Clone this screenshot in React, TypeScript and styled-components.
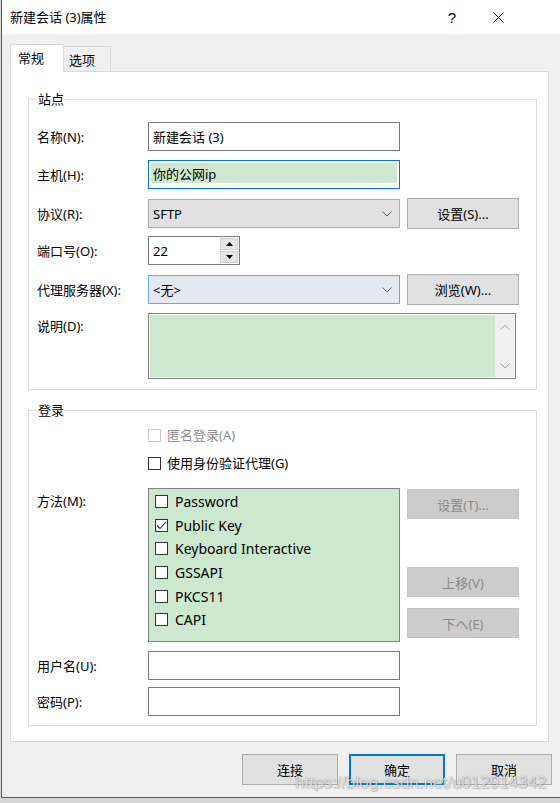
import React from 'react';
import styled, { createGlobalStyle, css } from 'styled-components';

const GlobalStyle = createGlobalStyle`
  html, body { margin: 0; padding: 0; background: #d6d6d6; }
  body {
    font-family: "Noto Sans", "Noto Sans CJK SC", sans-serif;
    font-size: 13px;
    color: #000;
  }
  * { box-sizing: border-box; }
`;

const Window = styled.div`
  position: relative;
  width: 559px;
  height: 798px;
  margin-left: 1px;
  background: #f0f0f0;
  border-left: 1px solid #5b5b5b;
  border-bottom: 1px solid #5b5b5b;
  display: flex;
  flex-direction: column;
`;

const TitleBar = styled.div`
  height: 34px;
  flex: none;
  background: #fff;
  display: flex;
  align-items: center;
  padding-left: 8px;
`;

const TitleText = styled.span`
  font-size: 13px;
  line-height: 18px;
`;

const TitleButtons = styled.div`
  margin-left: auto;
  display: flex;
  padding-right: 39px;
  height: 100%;
`;

const TitleButton = styled.div`
  width: 46px;
  height: 100%;
  display: flex;
  align-items: center;
  justify-content: center;
  font-family: "Liberation Sans", sans-serif;
  font-size: 15px;
`;

const Body = styled.div`
  flex: 1;
  display: flex;
  flex-direction: column;
  padding: 10px 0 0 8px;
`;

const TabStrip = styled.div`
  height: 27px;
  display: flex;
  align-items: flex-end;
`;

const Tab = styled.div<{ $active?: boolean }>`
  position: relative;
  display: flex;
  align-items: center;
  border: 1px solid #d9d9d9;
  border-bottom: none;
  ${(p) =>
    p.$active
      ? css`
          z-index: 1;
          height: 28px;
          margin-bottom: -1px;
          width: 54px;
          padding: 0 0 3px 7px;
          background: #fff;
        `
      : css`
          height: 25px;
          width: 48px;
          margin-left: -1px;
          padding: 0 0 0 5px;
          background: #f0f0f0;
        `}
`;

const Panel = styled.div`
  margin-right: 11px;
  background: #fff;
  border: 1px solid #d9d9d9;
  padding: 18px 11px 15px 17px;
  display: flex;
  flex-direction: column;
  gap: 11px;
`;

const Group = styled.fieldset<{ $pt: number; $pb: number }>`
  margin: 0;
  min-width: 0;
  border: 1px solid #dcdcdc;
  padding: ${(p) => p.$pt}px 16px ${(p) => p.$pb}px 8px;
`;

const Legend = styled.legend`
  padding: 0 1px;
  line-height: 18px;
  font-size: 13px;
`;

const Row = styled.div<{ $h: number; $mt?: number }>`
  display: grid;
  grid-template-columns: 104px 252px 112px;
  column-gap: 7px;
  align-items: center;
  height: ${(p) => p.$h}px;
  margin-top: ${(p) => p.$mt ?? 0}px;
`;

const Label = styled.span<{ $lh?: number }>`
  white-space: nowrap;
  line-height: ${(p) => p.$lh ?? 18}px;
  ${(p) => p.$lh && css`align-self: start;`}
`;

const TextBox = styled.div<{ $focused?: boolean; $tinted?: boolean }>`
  height: 29px;
  border: 1px solid ${(p) => (p.$focused ? '#0078d7' : '#7a7a7a')};
  background: #fff;
  display: flex;
  align-items: center;
  padding: 0 0 0 4px;
  white-space: nowrap;
  ${(p) =>
    p.$tinted &&
    css`
      padding: 2px 2px 5px 1px;
      background: #cce8cf;
      background-clip: content-box;
      box-shadow: inset 0 0 0 2px #fff;
    `}
`;

const TintedText = styled.span`
  padding-left: 3px;
`;

const Combo = styled.div<{ $hot?: boolean }>`
  height: 29px;
  display: flex;
  align-items: center;
  justify-content: space-between;
  padding: 0 7px 0 4px;
  border: 1px solid ${(p) => (p.$hot ? '#6ea6dc' : '#adadad')};
  background: ${(p) => (p.$hot ? '#e3e9f0' : '#e1e1e1')};
`;

const Button = styled.button<{ $kind?: 'normal' | 'disabled' | 'default'; $h?: number }>`
  height: ${(p) => p.$h ?? 31}px;
  width: 112px;
  margin: 0;
  padding: 0;
  font: inherit;
  font-size: 13px;
  color: #000;
  background: #e1e1e1;
  border: 1px solid #adadad;
  display: flex;
  align-items: center;
  justify-content: center;
  ${(p) =>
    p.$kind === 'disabled' &&
    css`
      background: #cccccc;
      border-color: #c4c4c4;
      color: #8a8a8a;
    `}
  ${(p) =>
    p.$kind === 'default' &&
    css`
      border: 2px solid #0078d7;
    `}
`;

const SpinBox = styled.div`
  width: 92px;
  height: 29px;
  border: 1px solid #7a7a7a;
  background: #fff;
  display: flex;
`;

const SpinValue = styled.span`
  flex: 1;
  display: flex;
  align-items: center;
  padding-left: 4px;
`;

const SpinButtons = styled.div`
  width: 19px;
  display: flex;
  flex-direction: column;
  gap: 1px;
  padding: 1px 1px 1px 0;
`;

const SpinHalf = styled.div`
  flex: 1;
  background: #e6e6e6;
  border: 1px solid #cfcfcf;
  display: flex;
  align-items: center;
  justify-content: center;
`;

const Memo = styled.div`
  grid-column: 2 / span 2;
  align-self: end;
  width: 368px;
  height: 66px;
  border: 1px solid #828282;
  background: #fff;
  padding: 1px;
  display: flex;
`;

const MemoArea = styled.div`
  flex: 1;
  background: #cce8cf;
`;

const ScrollBar = styled.div`
  width: 19px;
  background: #f0f0f0;
  display: flex;
  flex-direction: column;
  justify-content: space-between;
  align-items: center;
  padding: 9px 0 8px;
`;

const CheckRow = styled.label<{ $disabled?: boolean }>`
  grid-column: 2 / span 2;
  display: flex;
  align-items: center;
  gap: 6px;
  color: ${(p) => (p.$disabled ? '#8d8d8d' : '#000')};
  line-height: 18px;
`;

const Box = styled.span<{ $disabled?: boolean }>`
  width: 13px;
  height: 13px;
  flex: none;
  border: 1px solid ${(p) => (p.$disabled ? '#c8c8c8' : '#333')};
  background: #fff;
  display: flex;
  align-items: center;
  justify-content: center;
`;

const ListBox = styled.div`
  align-self: stretch;
  border: 1px solid #828282;
  background: #cce8cf;
  padding: 1px 0 0 6px;
`;

const ListItem = styled.div`
  height: 23.6px;
  display: flex;
  align-items: center;
  gap: 7px;
  font-size: 14px;
`;

const SideButtons = styled.div`
  align-self: stretch;
  display: flex;
  flex-direction: column;
  padding-top: 1px;
`;

const ButtonRow = styled.div`
  margin-top: 12px;
  display: flex;
  justify-content: flex-end;
  gap: 11px;
  padding-right: 8px;
`;

const DialogButton = styled(Button)`
  width: 96px;
`;

const Watermark = styled.div`
  position: absolute;
  left: 293px;
  top: 773px;
  font-family: "Liberation Sans", Arial, sans-serif;
  font-size: 17px;
  color: rgba(255, 255, 255, 0.72);
  text-shadow: 0 0 1px rgba(60, 60, 60, 0.55), 1px 1px 1px rgba(0, 0, 0, 0.18);
  pointer-events: none;
  white-space: nowrap;
`;

const Chevron = ({ color = '#606060', up = false }: { color?: string; up?: boolean }) => (
  <svg width="10" height="6" viewBox="0 0 10 6">
    <polyline
      points={up ? '0.5,5.5 5,1 9.5,5.5' : '0.5,0.5 5,5 9.5,0.5'}
      fill="none"
      stroke={color}
      strokeWidth="1"
    />
  </svg>
);

const Triangle = ({ up }: { up?: boolean }) => (
  <svg width="7" height="4" viewBox="0 0 7 4">
    <polygon points={up ? '0,4 3.5,0 7,4' : '0,0 3.5,4 7,0'} fill="#000" />
  </svg>
);

const Check = () => (
  <svg width="11" height="11" viewBox="0 0 11 11">
    <polyline points="1,5.5 4,8.5 10,2" fill="none" stroke="#333" strokeWidth="1.1" />
  </svg>
);

const CheckBox = ({
  children,
  checked,
  disabled,
}: {
  children: React.ReactNode;
  checked?: boolean;
  disabled?: boolean;
}) => (
  <CheckRow $disabled={disabled}>
    <Box $disabled={disabled}>{checked && <Check />}</Box>
    {children}
  </CheckRow>
);

const methods: { name: string; checked?: boolean }[] = [
  { name: 'Password' },
  { name: 'Public Key', checked: true },
  { name: 'Keyboard Interactive' },
  { name: 'GSSAPI' },
  { name: 'PKCS11' },
  { name: 'CAPI' },
];

export default function App() {
  return (
    <>
      <GlobalStyle />
      <Window>
        <TitleBar>
          <TitleText>新建会话 (3)属性</TitleText>
          <TitleButtons>
            <TitleButton>?</TitleButton>
            <TitleButton>
              <svg width="11" height="11" viewBox="0 0 11 11">
                <line x1="0.5" y1="0.5" x2="10.5" y2="10.5" stroke="#000" strokeWidth="1" />
                <line x1="10.5" y1="0.5" x2="0.5" y2="10.5" stroke="#000" strokeWidth="1" />
              </svg>
            </TitleButton>
          </TitleButtons>
        </TitleBar>

        <Body>
          <TabStrip>
            <Tab $active>常规</Tab>
            <Tab>选项</Tab>
          </TabStrip>

          <Panel>
            <Group $pt={14} $pb={10}>
              <Legend>站点</Legend>
              <Row $h={29}>
                <Label>名称(N):</Label>
                <TextBox>新建会话 (3)</TextBox>
              </Row>
              <Row $h={29} $mt={9}>
                <Label>主机(H):</Label>
                <TextBox $focused $tinted>
                  <TintedText>你的公网ip</TintedText>
                </TextBox>
              </Row>
              <Row $h={29} $mt={9}>
                <Label>协议(R):</Label>
                <Combo>
                  <span>SFTP</span>
                  <Chevron />
                </Combo>
                <Button>设置(S)...</Button>
              </Row>
              <Row $h={29} $mt={9}>
                <Label>端口号(O):</Label>
                <SpinBox>
                  <SpinValue>22</SpinValue>
                  <SpinButtons>
                    <SpinHalf>
                      <Triangle up />
                    </SpinHalf>
                    <SpinHalf>
                      <Triangle />
                    </SpinHalf>
                  </SpinButtons>
                </SpinBox>
              </Row>
              <Row $h={29} $mt={9}>
                <Label>代理服务器(X):</Label>
                <Combo $hot>
                  <span>&lt;无&gt;</span>
                  <Chevron />
                </Combo>
                <Button>浏览(W)...</Button>
              </Row>
              <Row $h={67} $mt={9}>
                <Label $lh={29}>说明(D):</Label>
                <Memo>
                  <MemoArea />
                  <ScrollBar>
                    <Chevron up color="#a6a6a6" />
                    <Chevron color="#a6a6a6" />
                  </ScrollBar>
                </Memo>
              </Row>
            </Group>

            <Group $pt={6} $pb={9}>
              <Legend>登录</Legend>
              <Row $h={20}>
                <CheckBox disabled>匿名登录(A)</CheckBox>
              </Row>
              <Row $h={20} $mt={8}>
                <CheckBox>使用身份验证代理(G)</CheckBox>
              </Row>
              <Row $h={154} $mt={15}>
                <Label $lh={26}>方法(M):</Label>
                <ListBox>
                  {methods.map((m) => (
                    <ListItem key={m.name}>
                      <Box>{m.checked && <Check />}</Box>
                      {m.name}
                    </ListItem>
                  ))}
                </ListBox>
                <SideButtons>
                  <Button $kind="disabled" $h={30}>
                    设置(T)...
                  </Button>
                  <Button $kind="disabled" $h={30} style={{ marginTop: 48 }}>
                    上移(V)
                  </Button>
                  <Button $kind="disabled" $h={30} style={{ marginTop: 11 }}>
                    下へ(E)
                  </Button>
                </SideButtons>
              </Row>
              <Row $h={29} $mt={9}>
                <Label>用户名(U):</Label>
                <TextBox />
              </Row>
              <Row $h={29} $mt={7}>
                <Label>密码(P):</Label>
                <TextBox />
              </Row>
            </Group>
          </Panel>

          <ButtonRow>
            <DialogButton>连接</DialogButton>
            <DialogButton $kind="default">确定</DialogButton>
            <DialogButton>取消</DialogButton>
          </ButtonRow>
        </Body>

        <Watermark>https://blog.csdn.net/u012914342</Watermark>
      </Window>
    </>
  );
}
